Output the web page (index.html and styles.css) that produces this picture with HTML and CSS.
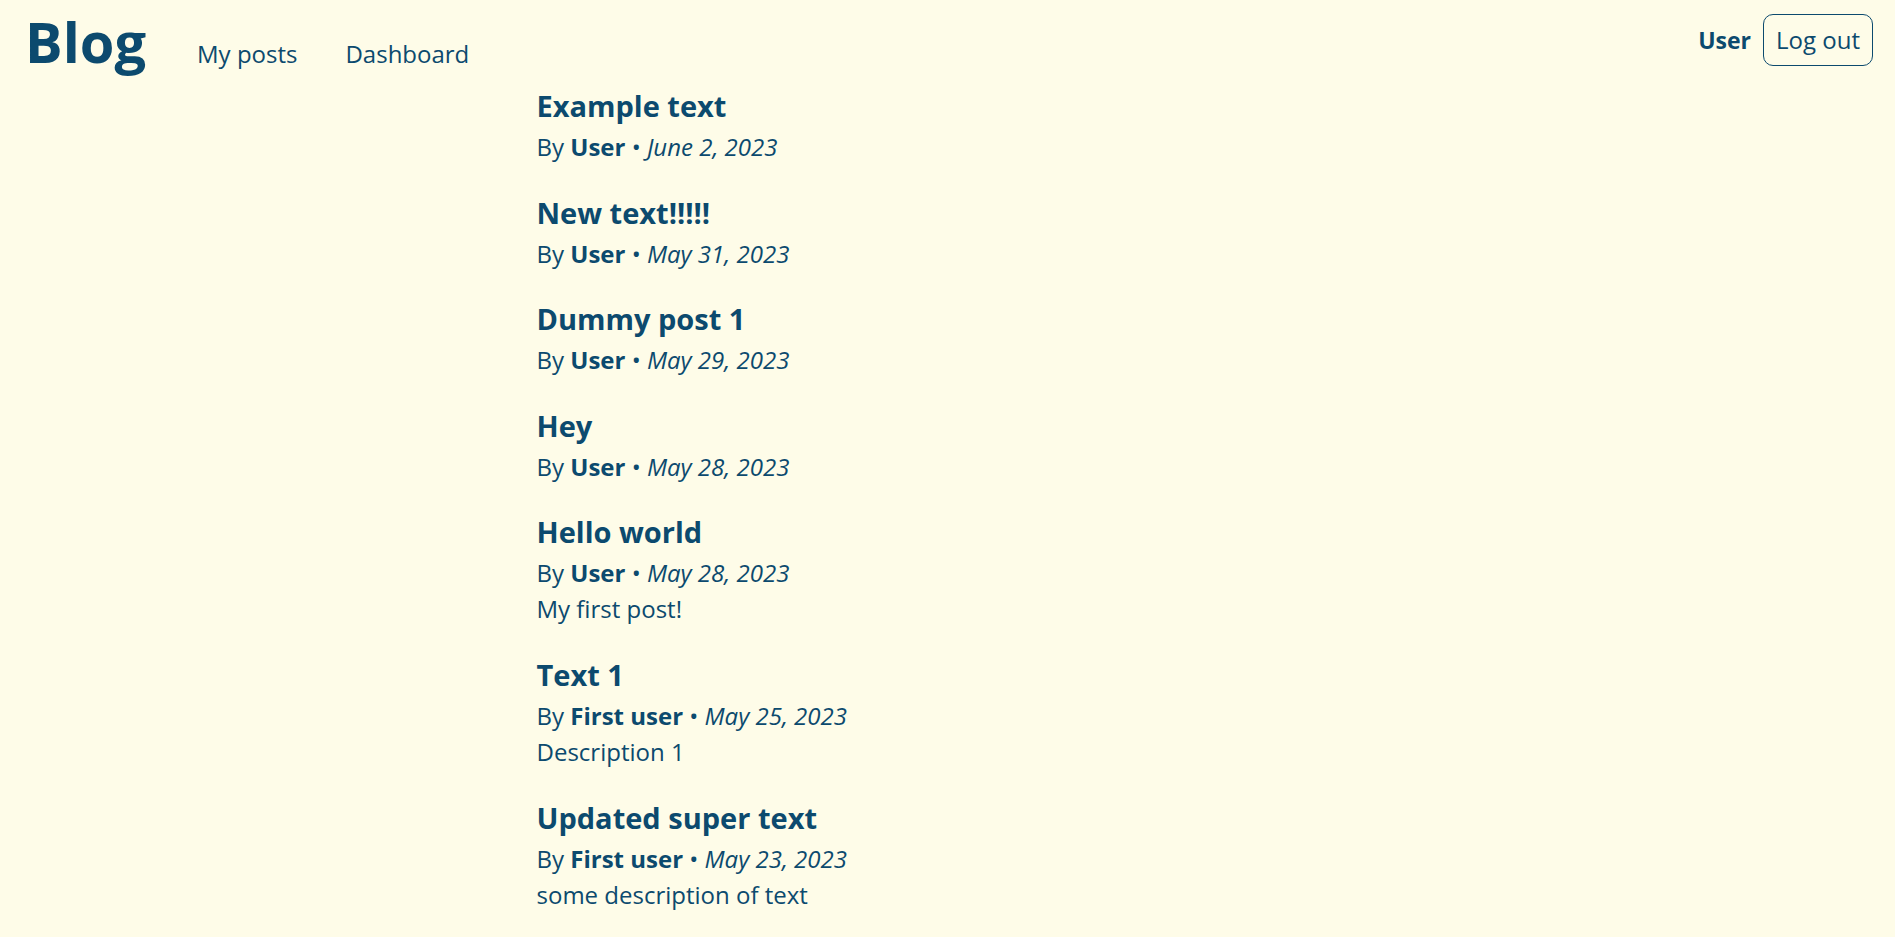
FILE: index.html
```html
<!DOCTYPE html>
<html lang="en">
<head>
<meta charset="utf-8">
<title>Blog</title>
<link rel="stylesheet" href="styles.css">
</head>
<body>
<header class="topbar">
  <div class="brand-nav">
    <a class="brand" href="#">Blog</a>
    <nav class="nav">
      <a class="nav-link" href="#">My posts</a>
      <a class="nav-link" href="#">Dashboard</a>
    </nav>
  </div>
  <div class="account">
    <span class="account-name">User</span>
    <button class="logout">Log out</button>
  </div>
</header>
<main class="posts">
  <article class="post">
    <h2 class="post-title">Example text</h2>
    <p class="post-meta">By <strong>User</strong> • <em>June 2, 2023</em></p>
  </article>
  <article class="post">
    <h2 class="post-title">New text!!!!!</h2>
    <p class="post-meta">By <strong>User</strong> • <em>May 31, 2023</em></p>
  </article>
  <article class="post">
    <h2 class="post-title">Dummy post 1</h2>
    <p class="post-meta">By <strong>User</strong> • <em>May 29, 2023</em></p>
  </article>
  <article class="post">
    <h2 class="post-title">Hey</h2>
    <p class="post-meta">By <strong>User</strong> • <em>May 28, 2023</em></p>
  </article>
  <article class="post">
    <h2 class="post-title">Hello world</h2>
    <p class="post-meta">By <strong>User</strong> • <em>May 28, 2023</em></p>
    <p class="post-desc">My first post!</p>
  </article>
  <article class="post">
    <h2 class="post-title">Text 1</h2>
    <p class="post-meta">By <strong>First user</strong> • <em>May 25, 2023</em></p>
    <p class="post-desc">Description 1</p>
  </article>
  <article class="post">
    <h2 class="post-title">Updated super text</h2>
    <p class="post-meta">By <strong>First user</strong> • <em>May 23, 2023</em></p>
    <p class="post-desc">some description of text</p>
  </article>
</main>
</body>
</html>
```
FILE: styles.css
```css
html, body {
  margin: 0;
  padding: 0;
}
body {
  background: #fefce8;
  color: #0c4a6e;
  font-family: "Open Sans", "Noto Sans", sans-serif;
  overflow: hidden;
}
a {
  color: inherit;
  text-decoration: none;
}
.topbar {
  display: flex;
  justify-content: space-between;
  align-items: flex-start;
  padding: 6px 22px 0 25px;
}
.brand-nav {
  display: flex;
  align-items: baseline;
}
.brand {
  font-size: 56px;
  font-weight: 700;
  line-height: 70px;
}
.nav {
  display: flex;
  gap: 48px;
  margin-left: 51px;
}
.nav-link {
  font-size: 24px;
  line-height: 36px;
}
.account {
  display: flex;
  align-items: center;
  gap: 12px;
  margin-top: 8px;
}
.account-name {
  font-size: 23px;
  font-weight: 700;
}
.logout {
  font-family: inherit;
  font-size: 24px;
  line-height: 36px;
  color: inherit;
  background: transparent;
  border: 1px solid #0c4a6e;
  border-radius: 10px;
  padding: 7px 12px;
}
.posts {
  max-width: 822px;
  margin: 7px auto 0;
  display: flex;
  flex-direction: column;
  gap: 24.6px;
}
.post-title {
  margin: 0;
  font-size: 29px;
  font-weight: 700;
  line-height: 46px;
}
.post-meta,
.post-desc {
  margin: 0;
  font-size: 24px;
  line-height: 36px;
}
```
